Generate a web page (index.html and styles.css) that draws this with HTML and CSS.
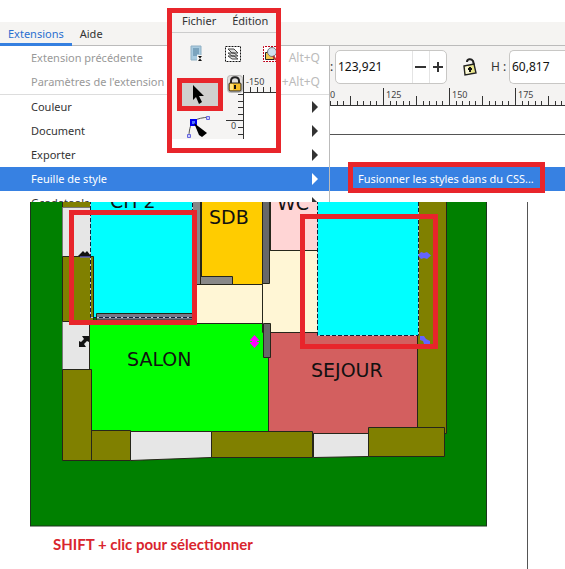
FILE: index.html
```html
<!DOCTYPE html>
<html lang="fr">
<head>
<meta charset="utf-8">
<title>Extensions – Feuille de style</title>
<link rel="stylesheet" href="styles.css">
</head>
<body>
<nav class="menubar">
  <button class="tab active">Extensions</button>
  <button class="tab">Aide</button>
</nav>

<div class="workspace">
  <div class="menu">
    <button class="item" disabled><span>Extension précédente</span><span class="keys">Alt+Q</span></button>
    <button class="item" disabled><span>Paramètres de l'extension</span><span class="keys">+Alt+Q</span></button>
    <hr class="separator">
    <button class="item sub">Couleur</button>
    <button class="item sub">Document</button>
    <button class="item sub">Exporter</button>
    <button class="item sub selected">Feuille de style</button>
    <button class="item sub cut">Gcodetools</button>
  </div>

  <div class="editor">
    <div class="toolbar">
      <label class="prefix" for="width">:</label>
      <div class="field">
        <input id="width" value="123,921">
        <button aria-label="Diminuer"><svg width="12" height="12"><path d="M0 6H11" stroke="#333" stroke-width="2"/></svg></button>
        <button aria-label="Augmenter"><svg width="12" height="12"><path d="M1 6H11M6 1V11" stroke="#333" stroke-width="2"/></svg></button>
      </div>
      <button class="lock" aria-label="Verrouiller les proportions">
        <svg width="16" height="18" viewBox="0 0 16 18">
          <path d="M5 4C5 1 9 0 11 3L12 7" fill="none" stroke="#222" stroke-width="2"/>
          <path d="M2 8L12 6L14 15L3 17Z" fill="#e9e58c" stroke="#222" stroke-width="1.4"/>
          <path d="M3 9L6 8L8 15L4 16Z" fill="#fff" opacity=".7"/>
          <path d="M8 9V14M6 11H10" stroke="#111" stroke-width="2"/>
        </svg>
      </button>
      <label class="height-label" for="height">H :</label>
      <div class="field open"><input id="height" value="60,817"></div>
    </div>
    <svg class="ruler" width="100%" height="20">
      <defs>
        <pattern id="ticks" x="-13" y="0" width="66" height="20" patternUnits="userSpaceOnUse">
          <path d="M.5 2V20M33.5 10V20M7.5 15V20M13.5 15V20M20.5 15V20M26.5 15V20M40.5 15V20M46.5 15V20M53.5 15V20M59.5 15V20" stroke="#333"/>
        </pattern>
      </defs>
      <rect width="100%" height="20" fill="url(#ticks)"/>
      <path d="M0 19.5H4000" stroke="#333"/>
      <text x="0" y="12">0</text><text x="56" y="12">125</text><text x="122" y="12">150</text><text x="188" y="12">175</text>
    </svg>
    <div class="page-top"></div>
    <div class="submenu"><button>Fusionner les styles dans du CSS...</button><span class="frame"></span></div>
  </div>
</div>

<main class="page">
  <svg class="plan" width="458" height="325" viewBox="30 202 458 325" role="img" aria-label="Plan">
    <rect x="30.500" y="190" width="456" height="336" fill="#008000" stroke="#1c341c"/>
    <g stroke="#26261a" stroke-width="1">
      <path d="M62.500 200H91V207.500H62.500Z" fill="#808000"/>
      <path d="M62.500 207.500H91.500V256.500H62.500ZM62.500 321.500H89.500V369.500H62.500Z" fill="#e6e6e6" stroke="#777"/>
      <path d="M89.500 323.500H268.500V432.500H89.500Z" fill="#00ff00"/>
      <path d="M268.500 332.500H417.500V433.500H268.500Z" fill="#d35f5f"/>
      <path d="M195 284.500H262.500V323.500H195ZM262.500 250.500H317.500V332.500H262.500Z" fill="#fff6d5"/>
      <path d="M270.500 200H317.500V250.500H270.500Z" fill="#ffd5d5"/>
      <path d="M201.500 200H262.500V284.500H201.500Z" fill="#ffcc00"/>
      <path d="M192.500 200H200.500V284.500H192.500ZM200.500 276.500H232.500V284.500H200.500Z" fill="#888"/>
      <path d="M262.500 200H269.500V283.500H262.500ZM263.500 323.500H270.500V357.500H263.500Z" fill="#686868"/>
      <path d="M417.500 200H446.500V433.500H417.500ZM62.500 369.500H91.500V460.500H62.500ZM91.500 430.500H130.500V460.500H91.500Z" fill="#808000"/>
      <path d="M130.500 431.500H211.500V457.500L130.500 460.500ZM313.500 433.500H368.500V456.500L313.500 457.500Z" fill="#e6e6e6"/>
      <path d="M211.500 431.500H312.500V457.500H211.500ZM368.500 427.500H444.500V456.500H368.500Z" fill="#808000"/>
      <path d="M90.500 200H192.500V317.500H90.500Z" fill="#00ffff" stroke="none"/>
      <path d="M62.500 256.500H93.500V321.500H62.500Z" fill="#808000"/>
      <path d="M96.500 313.500H192.500V320H96.500Z" fill="#777788"/>
      <path d="M317.500 200H418.500V335.500H317.500Z" fill="#00ffff" stroke="none"/>
    </g>
    <path d="M90.500 200V317.500H192.500V200M317.500 200V335.500H418.500V200" fill="none" stroke="#b8c8d8"/>
    <path d="M90.500 200V317.500H192.500V200M317.500 200V335.500H418.500V200" fill="none" stroke="#10203a" stroke-dasharray="4 2"/>
    <path d="M78 256L83 251L85 253L87 251L91 256Z" fill="#111"/>
    <path d="M80 257H90" stroke="#6464ff"/>
    <path d="M82 336H89V342L87 341L84 344L86 347H79V341L81 342L84 339Z" fill="#111"/>
    <path d="M254.500 335L259 340V341H257V342H259V343L254.500 348L250 343V342H252V341H250V340Z" fill="#ff00ff"/>
    <path d="M418 255.500L421 252L424 253L427 252L431 255.500L427 259L424 258L421 259Z" fill="#6464ff"/>
    <path d="M420 336H424L426 339L430 341V344H424L423 341L420 340Z" fill="#6464ff"/>
    <g class="rooms">
      <text x="110" y="208">CH 2</text><text x="277" y="210">WC</text>
      <text x="209" y="224">SDB</text><text x="127" y="366">SALON</text><text x="311" y="377">SEJOUR</text>
    </g>
    <path d="M71.500 212.500H194.500V322.500H71.500ZM302.500 216.500H435.500V346.500H302.500Z" fill="none" stroke="#e8252b" stroke-width="5"/>
  </svg>
  <p class="note">SHIFT + clic pour sélectionner</p>
</main>

<aside class="inset">
  <div class="inset-menu"><button>Fichier</button><button>Édition</button></div>
  <div class="inset-icons">
    <svg width="14" height="18" viewBox="0 0 14 18">
      <path d="M1 1H11V15H1Z" fill="#a9cbe0" stroke="#8fb0c4"/>
      <path d="M3 4H9M3 6H9M3 8H9M3 10H7" stroke="#4f7d9b"/>
      <path d="M7 10H13V17H7Z" fill="#f5f4f3"/>
      <path d="M8 11H12L10 13.500L12 16H8L10 13.500Z" fill="#111"/>
    </svg>
    <svg width="18" height="18" viewBox="0 0 18 18">
      <rect x="1.500" y="1.500" width="15" height="15" fill="#fff" stroke="#111" stroke-dasharray="2 1"/>
      <path d="M4 11L10 11L14 14L8 14ZM4 8L10 8L14 11H8ZM4 4L10 4L14 8H8Z" fill="#ddd" stroke="#444"/>
    </svg>
    <svg width="14" height="18" viewBox="0 0 14 18">
      <path d="M14 1.500H1.500V16.500H14" fill="#fff" stroke="#c00018" stroke-dasharray="2 1"/>
      <path d="M3.500 7.500H12V14.500H3.500Z" fill="#f1c84c" stroke="#222"/>
      <circle cx="10" cy="7" r="4.500" fill="#cfe0ee" stroke="#777"/>
      <path d="M11 11L14 15" stroke="#b33" stroke-width="2"/>
    </svg>
  </div>
  <div class="inset-body">
    <div class="tools">
      <button class="tool chosen" aria-label="Sélecteur">
        <svg width="12" height="20" viewBox="0 0 12 20"><path d="M1 1V16L4 13L7 20L10 18L7 12H12Z" fill="#000"/></svg>
      </button>
      <button class="tool" aria-label="Nœuds">
        <svg width="26" height="24" viewBox="0 0 26 24">
          <path d="M3 21C3 14 5 8 8 6C12 3 17 3 22 2" fill="none" stroke="#555"/>
          <path d="M1.500 19.500H4.500V22.500H1.500ZM20.500 1.500H23.500V4.500H20.500Z" fill="#ccccff" stroke="#6666dd"/>
          <path d="M5 5H10V10H5Z" fill="#5577ff" stroke="#0000ee" stroke-width="2"/>
          <path d="M8 8L21 18L16 22L13 20Z" fill="#000"/>
        </svg>
      </button>
    </div>
    <svg class="inset-ruler" width="50" height="65" viewBox="226 74 50 65">
      <rect x="244" y="93" width="32" height="46" fill="#fff"/>
      <rect x="227.500" y="75.500" width="15" height="17" rx="3" fill="#e0dfdd" stroke="#b8b7b5"/>
      <path d="M231 84V81C231 76 239 76 239 81V84" fill="none" stroke="#222" stroke-width="2"/>
      <rect x="229" y="83" width="12" height="8" rx="1" fill="#f3bd28" stroke="#222"/>
      <path d="M230 84H233V90H230Z" fill="#ffe37e"/>
      <path d="M235 85V89" stroke="#111" stroke-width="2"/>
      <path d="M243.500 75V139M243 92.500H276M250.500 87V92M257.500 87V92M263.500 87V92M270.500 87V92M226 120.500H243M238 94.500H243M238 101.500H243M238 107.500H243M238 114.500H243M238 127.500H243M238 134.500H243" stroke="#333"/>
      <text x="246" y="85">-150</text><text x="231" y="129">0</text>
    </svg>
  </div>
</aside>
</body>
</html>
```

FILE: styles.css
```css
* { box-sizing: border-box; }

body {
  margin: 0;
  padding-top: 22px;
  position: relative;
  background: #fff;
  color: #333;
  font: 11px/24px "Noto Sans", "Open Sans", sans-serif;
}

button, input {
  margin: 0;
  padding: 0;
  border: 0;
  background: none;
  color: inherit;
  font: inherit;
}

svg { display: block; }

.menubar {
  display: flex;
  height: 24px;
  background: #f5f4f2;
  border-bottom: 1px solid #bbb;
}

.tab { height: 24px; padding: 0 8px; }

.tab.active {
  color: #2a6fd0;
  border-bottom: 3px solid #3580e0;
}

.workspace { display: flex; }

.menu {
  width: 330px;
  flex: none;
  border-right: 1px solid #bbb;
}

.item {
  display: flex;
  justify-content: space-between;
  width: 100%;
  height: 24px;
  padding: 0 9px 0 31px;
  text-align: left;
  white-space: nowrap;
}

.item:disabled { color: #999; }
.item .keys { color: #bbb; font-size: 12px; }

.sub { padding-right: 11px; }

.sub::after {
  content: "";
  width: 6px;
  height: 12px;
  margin-top: 6px;
  background: currentColor;
  clip-path: polygon(0 0, 100% 50%, 0 100%);
}

.selected { background: #3781e2; color: #fff; }
.cut { height: 11px; overflow: hidden; align-items: flex-start; }

.separator {
  height: 1px;
  margin: 0;
  border: 0;
  background: #ddd;
}

.editor {
  flex: 1;
  min-width: 0;
}

.toolbar {
  display: flex;
  align-items: center;
  height: 40px;
  padding-top: 2px;
  background: #f4f3f2;
  font-size: 12px;
}

.prefix { width: 5px; flex: none; }

.field {
  display: flex;
  width: 112px;
  height: 34px;
  flex: none;
  background: #fff;
  border: 1px solid #c8c7c5;
  border-radius: 5px;
  color: #111;
}

.field input { flex: 1; min-width: 0; padding-left: 2px; }

.field button {
  display: flex;
  align-items: center;
  justify-content: center;
  width: 17px;
  border-left: 1px solid #e4e4e4;
}

.field.open {
  flex: 1;
  min-width: 0;
  border-right: 0;
  border-radius: 5px 0 0 5px;
}

.lock { margin-left: 15px; }
.height-label { width: 18px; margin-left: 13px; flex: none; white-space: nowrap; }

.ruler { background: #f4f3f2; }

.ruler text, .inset-ruler text {
  font: 9px "Noto Sans", sans-serif;
  fill: #444;
}

.page-top {
  height: 61px;
  background: linear-gradient(#555, #555) 0 28px / 100% 1px no-repeat;
}

.submenu {
  position: relative;
  height: 24px;
  padding-left: 28px;
  background: #3781e2;
  color: #fff;
}

.frame {
  position: absolute;
  left: 18px;
  top: -5px;
  width: 197px;
  height: 31px;
  border: 5px solid #e8252b;
}

.page {
  min-height: 367px;
  margin-right: 37px;
  padding-left: 30px;
  border-right: 1px solid #555;
}

.rooms {
  font: 19px "DejaVu Sans", sans-serif;
  fill: #111;
}

.note {
  margin: 0;
  padding: 5px 0 0 23px;
  color: #d9252d;
  font: bold 15px/24px Lato, "Open Sans", sans-serif;
}

.inset {
  position: absolute;
  left: 167px;
  top: 8px;
  width: 114px;
  height: 145px;
  overflow: hidden;
  border: 5px solid #e8252b;
  background: linear-gradient(#f5f4f3, #f5f4f3) 0 0 / 100% 126px no-repeat #fff;
}

.inset-menu {
  display: flex;
  gap: 16px;
  height: 20px;
  padding-left: 10px;
  border-bottom: 1px solid #ccc;
  line-height: 16px;
}

.inset-menu button { height: 16px; }

.inset-icons {
  display: flex;
  gap: 20px;
  padding: 12px 0 11px 18px;
}

.inset-icons svg { flex: none; }

.inset-body { display: flex; }

.tools { width: 54px; flex: none; padding: 4px 0 0 5px; }

.tool {
  display: flex;
  width: 46px;
  padding: 4px 0 0 9px;
}

.tool.chosen {
  height: 33px;
  padding: 1px 0 0 10px;
  border: 5px solid #e8252b;
  background: #d0cfce;
}

.inset-ruler { flex: none; }
```
